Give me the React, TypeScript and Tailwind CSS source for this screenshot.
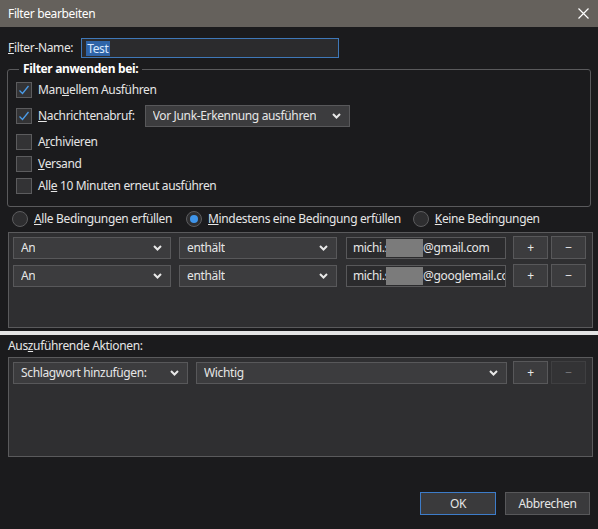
import React from 'react';

const Chevron: React.FC = () => (
  <svg width="9" height="6" viewBox="0 0 9 6" className="shrink-0">
    <polyline points="1,1 4.5,4.5 8,1" fill="none" stroke="#e8e8e8" strokeWidth="2" />
  </svg>
);

const Check: React.FC<{ checked?: boolean }> = ({ checked }) => (
  <div className="w-[16px] h-[16px] shrink-0 bg-[#333335] border border-[#5c5c5e] flex items-center justify-center">
    {checked && (
      <svg width="12" height="12" viewBox="0 0 12 12">
        <polyline points="1.5,6.5 4.5,9.5 10.5,2" fill="none" stroke="#4a9be8" strokeWidth="1.3" />
      </svg>
    )}
  </div>
);

const Radio: React.FC<{ checked?: boolean }> = ({ checked }) => (
  <div className="w-[16px] h-[16px] shrink-0 rounded-full bg-[#2e2e30] border border-[#5c5c5e] flex items-center justify-center">
    {checked && <div className="w-[8px] h-[8px] rounded-full bg-[#3f95ea]" />}
  </div>
);

const Select: React.FC<{ label: string; w: string }> = ({ label, w }) => (
  <div className={`${w} h-[22px] shrink-0 bg-[#3c3c3e] border border-[#58585a] flex items-center justify-between pl-[7px] pr-[8px]`}>
    <span className="truncate">{label}</span>
    <Chevron />
  </div>
);

const SmallBtn: React.FC<{ label: string; disabled?: boolean }> = ({ label, disabled }) => (
  <div
    className={`w-[35px] h-[23px] shrink-0 border flex items-center justify-center ${
      disabled ? 'bg-[#333335] border-[#3f3f41] text-[#77777a]' : 'bg-[#3c3c3e] border-[#58585a] text-[#e8e8e8]'
    }`}
  >
    {label}
  </div>
);

const CheckRow: React.FC<{ checked?: boolean; children: React.ReactNode }> = ({ checked, children }) => (
  <div className="h-[22px] flex items-center gap-[6px]">
    <Check checked={checked} />
    <span>{children}</span>
  </div>
);

// address with the redacted middle part
const Mail: React.FC<{ user: string; domain: string }> = ({ user, domain }) => (
  <div className="w-[160px] h-[22px] shrink-0 bg-[#2b2b2d] border border-[#58585a] flex items-center pl-[6px] overflow-hidden whitespace-nowrap">
    <span>{user}</span>
    <span className="inline-block w-[37px] h-[18px] bg-[#7b7b7b] -ml-[4px] shrink-0" />
    <span>{domain}</span>
  </div>
);

const conditions = [
  { user: 'michi.s', domain: '@gmail.com' },
  { user: 'michi.s', domain: '@googlemail.com' },
];

export default function App() {
  return (
    <div
      className="w-[598px] h-[529px] bg-[#1b1b1d] text-[#e6e6e6] text-[12px] tracking-[-0.35px] flex flex-col overflow-hidden"
      style={{ fontFamily: '"Segoe UI", "Noto Sans", sans-serif' }}
    >
      <div className="h-[27px] shrink-0 bg-[#65615c] flex items-center justify-between pl-[8px] pr-[9px] text-white">
        <span>Filter bearbeiten</span>
        <svg width="11" height="11" viewBox="0 0 11 11">
          <path d="M0.5 0.5 L10.5 10.5 M10.5 0.5 L0.5 10.5" stroke="#ffffff" strokeWidth="1.2" />
        </svg>
      </div>

      <div className="flex flex-col px-[7px]">
        <div className="mt-[11px] flex items-center pl-[1px]">
          <span>
            <span className="underline">F</span>ilter-Name:
          </span>
          <div className="ml-[8px] w-[258px] h-[20px] bg-[#2b2b2d] border border-[#3f78b8] flex items-center pl-[4px]">
            <span className="bg-[#2f64a8] text-[#d8e8ff] px-[1px] leading-[15px]">Test</span>
          </div>
        </div>

        <fieldset className="mt-[4px] border border-[#5a5a5c] rounded-[3px] pl-[8px] pb-[9px]">
          <legend className="ml-[3px] px-[4px] font-bold text-white leading-[14px]">Filter anwenden bei:</legend>
          <div className="mt-[3px]">
            <CheckRow checked>
              Man<span className="underline">u</span>ellem Ausführen
            </CheckRow>
          </div>
          <div className="mt-[4px] h-[22px] flex items-center gap-[6px]">
            <Check checked />
            <span>
              <span className="underline">N</span>achrichtenabruf:
            </span>
            <div className="ml-[4px]">
              <Select label="Vor Junk-Erkennung ausführen" w="w-[205px]" />
            </div>
          </div>
          <div className="mt-[4px]">
            <CheckRow>
              A<span className="underline">r</span>chivieren
            </CheckRow>
          </div>
          <CheckRow>
            <span className="underline">V</span>ersand
          </CheckRow>
          <CheckRow>
            All<span className="underline">e</span> 10 Minuten erneut ausführen
          </CheckRow>
        </fieldset>

        <div className="mt-[4px] h-[16px] flex items-center pl-[5px]">
          <Radio />
          <span className="ml-[6px]">
            <span className="underline">A</span>lle Bedingungen erfüllen
          </span>
          <div className="ml-[14px]">
            <Radio checked />
          </div>
          <span className="ml-[6px]">
            <span className="underline">M</span>indestens eine Bedingung erfüllen
          </span>
          <div className="ml-[12px]">
            <Radio />
          </div>
          <span className="ml-[6px]">
            <span className="underline">K</span>eine Bedingungen
          </span>
        </div>

        <div className="mt-[5px] ml-[1px] w-[585px] h-[96px] bg-[#2f2f31] border border-[#5a5a5c] flex flex-col gap-[5px] pt-[3px] pl-[4px]">
          {conditions.map((r, i) => (
            <div key={i} className="flex items-center">
              <Select label="An" w="w-[158px]" />
              <div className="ml-[8px]">
                <Select label="enthält" w="w-[158px]" />
              </div>
              <div className="ml-[9px]">
                <Mail user={r.user} domain={r.domain} />
              </div>
              <div className="ml-[7px] flex gap-[3px]">
                <SmallBtn label="+" />
                <SmallBtn label="−" />
              </div>
            </div>
          ))}
        </div>
      </div>

      <div className="mt-[3px] h-[4px] bg-[#e4e4e4] shrink-0" />

      <div className="flex flex-col px-[8px]">
        <div className="mt-[3px] h-[16px] flex items-center">
          <span>
            Aus<span className="underline">z</span>uführende Aktionen:
          </span>
        </div>
        <div className="mt-[3px] w-[585px] h-[100px] bg-[#2f2f31] border border-[#5a5a5c] pt-[3px] pl-[4px]">
          <div className="flex items-center">
            <Select label="Schlagwort hinzufügen:" w="w-[175px]" />
            <div className="ml-[8px]">
              <Select label="Wichtig" w="w-[311px]" />
            </div>
            <div className="ml-[6px] flex gap-[3px]">
              <SmallBtn label="+" />
              <SmallBtn label="−" disabled />
            </div>
          </div>
        </div>

        <div className="mt-[35px] flex justify-end gap-[9px]">
          <div className="w-[76px] h-[23px] bg-[#3a3a3c] border border-[#3d7cc9] flex items-center justify-center">OK</div>
          <div className="w-[85px] h-[23px] bg-[#3a3a3c] border border-[#58585a] flex items-center justify-center">
            Abbrechen
          </div>
        </div>
      </div>
    </div>
  );
}
